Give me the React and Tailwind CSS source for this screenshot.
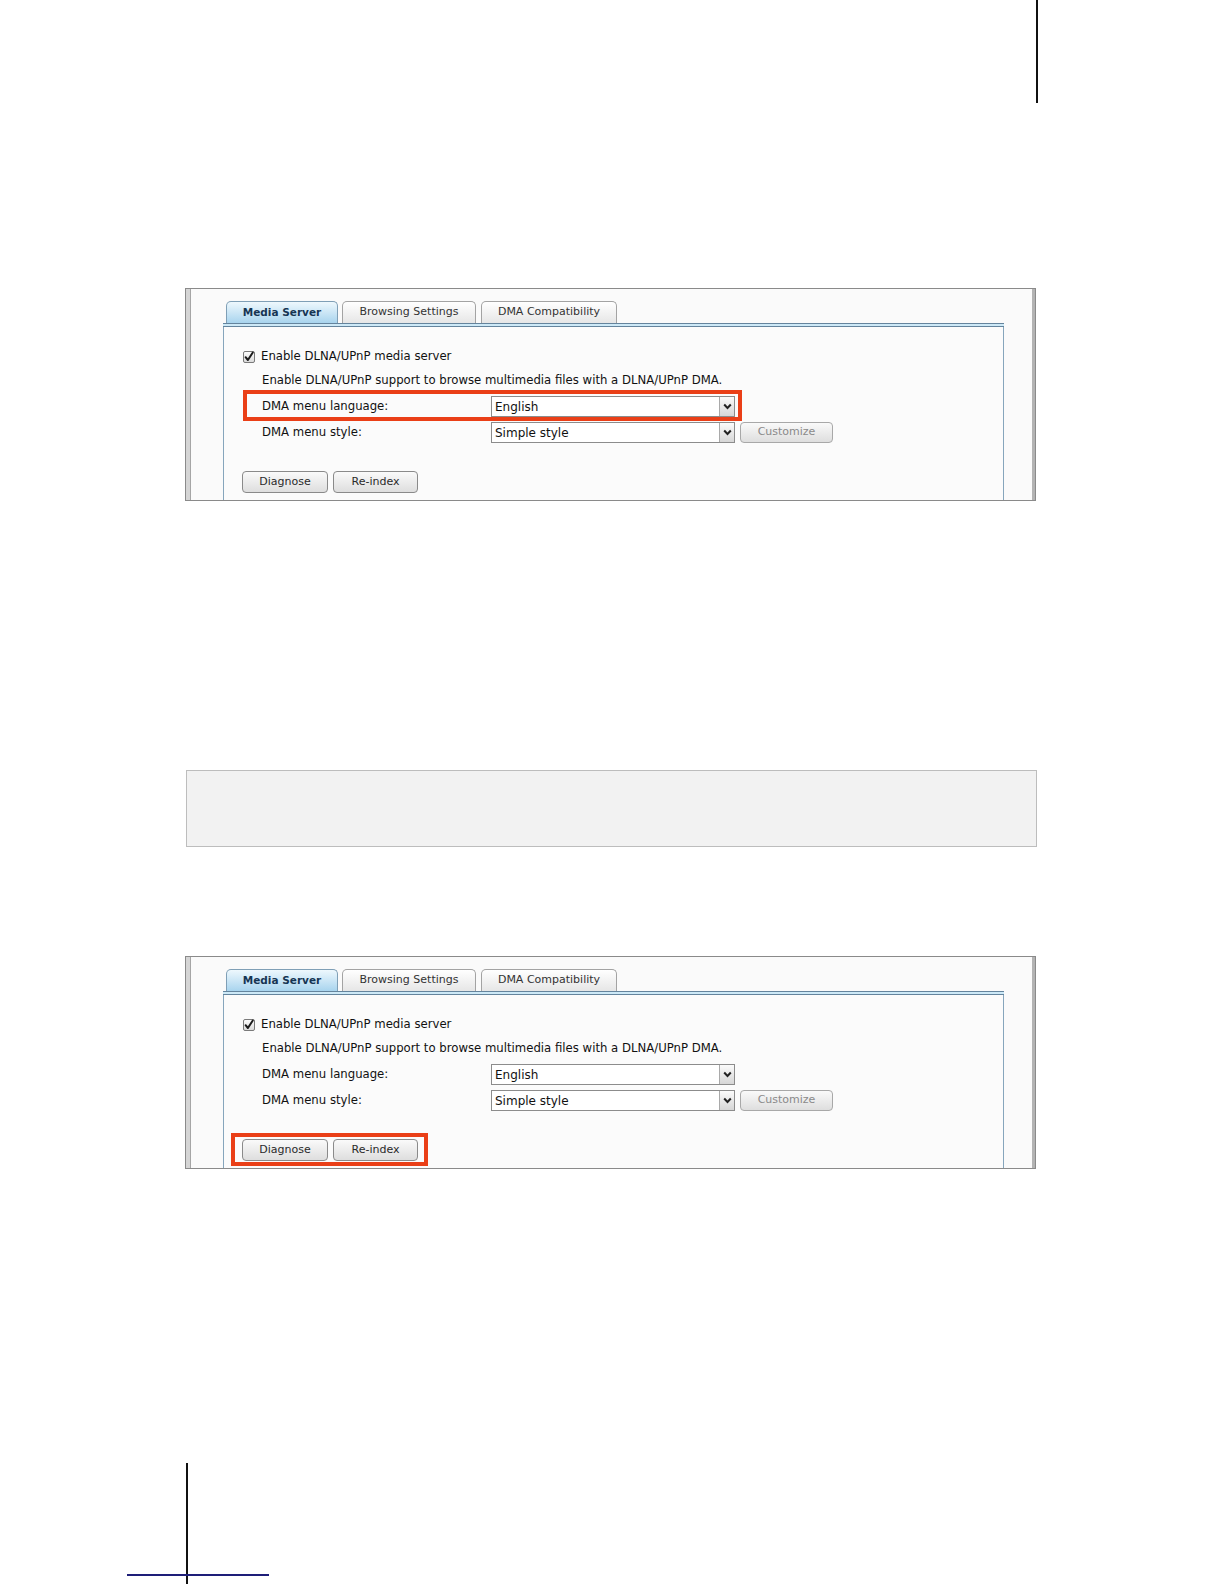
import React from 'react'

const uiFont = {fontFamily: '"DejaVu Sans", Verdana, sans-serif'}

const Checkbox = () => (
    <svg width="12" height="12" viewBox="0 0 12 12" className="shrink-0">
        <defs>
            <linearGradient id="cbg" x1="0" y1="0" x2="0" y2="1">
                <stop offset="0" stopColor="#ffffff" />
                <stop offset="1" stopColor="#d9d9d9" />
            </linearGradient>
        </defs>
        <rect x="0.5" y="0.5" width="11" height="11" rx="1.5" fill="url(#cbg)" stroke="#7a7a7a" />
        <path d="M2.6 6.2 L4.9 9 L9.8 1.5" fill="none" stroke="#1c1c1c" strokeWidth="2" strokeLinecap="round" strokeLinejoin="round" />
    </svg>
)

const Chevron = () => (
    <svg width="9" height="7" viewBox="0 0 9 7">
        <path d="M1.2 1.5 L4.5 5 L7.8 1.5" fill="none" stroke="#222" strokeWidth="2" strokeLinejoin="miter" />
    </svg>
)

// fake select box with the mac style arrow at the right
const Select = ({value}) => (
    <div className="flex h-[21px] w-[244px] border border-[#8c8c8c] bg-white">
        <div className="flex flex-1 items-center pl-[3px] text-[12px] text-[#111]">{value}</div>
        <div className="flex w-[15px] items-center justify-center border-l border-[#a9a9a9] bg-gradient-to-b from-[#fbfbfb] to-[#d6d6d6]">
            <Chevron />
        </div>
    </div>
)

const Button = ({children, width, disabled}) => (
    <div
        className={`flex items-center justify-center rounded-[4px] border bg-gradient-to-b from-[#fafafa] to-[#dedede] text-[11px] ${
            disabled ? 'border-[#a8a8a8] text-[#8a8a8a]' : 'border-[#8a8a8a] text-[#2a2a2a]'
        }`}
        style={{width}}
    >
        {children}
    </div>
)

const Tab = ({label, active, width}) => (
    <div
        className={`flex h-[22px] items-center justify-center rounded-t-[5px] border border-b-0 ${
            active
                ? 'border-[#7f9fb6] bg-gradient-to-b from-[#eef8fd] to-[#a8d4ee] text-[10.5px] font-bold text-[#163553]'
                : 'border-[#a3a3a3] bg-gradient-to-b from-[#ffffff] to-[#e6e6e6] text-[11px] text-[#333]'
        }`}
        style={{width}}
    >
        {label}
    </div>
)

const RedBox = ({className}) => (
    <div className={`pointer-events-none absolute border-[4px] border-[#ea3f17] ${className}`}></div>
)

const MediaServerShot = ({highlight}) => (
    <div className="ml-[185px] flex h-[213px] w-[851px] border border-[#8a8a8a] bg-[#fafafa]" style={uiFont}>
        <div className="w-[5px] border-r border-[#a5a5a5] bg-[#d5d5d5]"></div>

        <div className="flex flex-1 flex-col pl-[32px] pt-[12px]">
            {/* tabs */}
            <div className="ml-[3px] flex h-[22px] items-end">
                <Tab label="Media Server" active width={112} />
                <div className="w-[4px]"></div>
                <Tab label="Browsing Settings" width={134} />
                <div className="w-[5px]"></div>
                <Tab label="DMA Compatibility" width={136} />
            </div>

            <div className="flex w-[781px] flex-1 flex-col overflow-hidden">
                <div className="h-[4px] border-y border-[#64849d] bg-[#cde9f7]"></div>
                <div className="flex flex-1 flex-col border-x border-[#86a5bc] bg-[#fbfbfb] pl-[18px] pt-[21px] text-[11.7px] text-[#111]">
                    <div className="flex h-[18px] items-center gap-[6px] pl-[1px]">
                        <Checkbox />
                        <span>Enable DLNA/UPnP media server</span>
                    </div>

                    <div className="mt-[6px] flex h-[18px] items-center pl-[20px]">
                        Enable DLNA/UPnP support to browse multimedia files with a DLNA/UPnP DMA.
                    </div>

                    <div className="relative mt-[6px] flex h-[21px] items-center pl-[20px]">
                        <div className="w-[229px]">DMA menu language:</div>
                        <Select value="English" />
                        {highlight === 'language' && <RedBox className="left-[1px] top-[-6px] h-[31px] w-[499px]" />}
                    </div>

                    <div className="mt-[5px] flex h-[21px] items-center pl-[20px]">
                        <div className="w-[229px]">DMA menu style:</div>
                        <Select value="Simple style" />
                        <div className="ml-[5px] flex h-[21px]">
                            <Button width={93} disabled>Customize</Button>
                        </div>
                    </div>

                    <div className="relative mt-[28px] flex h-[22px] gap-[5px]">
                        <Button width={86}>Diagnose</Button>
                        <Button width={85}>Re-index</Button>
                        {highlight === 'buttons' && <RedBox className="left-[-11px] top-[-6px] h-[33px] w-[197px]" />}
                    </div>
                </div>
            </div>
        </div>

        <div className="ml-[28px] w-[3px] bg-[#b3b3b3]"></div>
    </div>
)

const App = () => {
    return (
        <div className="relative flex h-[1584px] w-[1224px] flex-col overflow-hidden bg-white">
            {/* page edge mark, top right */}
            <div className="ml-[1036px] h-[103px] w-[2px] bg-[#111]"></div>

            <div className="mt-[185px]">
                <MediaServerShot highlight="language" />
            </div>

            {/* empty grey note box */}
            <div className="ml-[186px] mt-[269px] h-[77px] w-[851px] border border-[#bdbdbd] bg-[#f2f2f2]"></div>

            <div className="mt-[109px]">
                <MediaServerShot highlight="buttons" />
            </div>

            {/* page edge mark, bottom left */}
            <div className="relative mt-auto h-[121px]">
                <div className="ml-[186px] h-full w-[2px] bg-[#111]"></div>
                <div className="absolute left-[127px] top-[111px] h-[2px] w-[142px] bg-[#1e1e78]"></div>
            </div>
        </div>
    )
}

export default App
